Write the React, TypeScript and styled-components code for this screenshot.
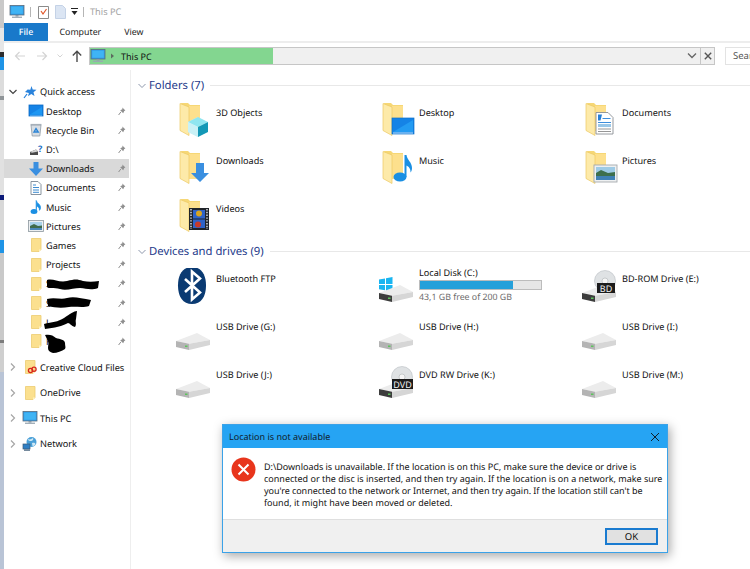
import React from "react";
import styled, { createGlobalStyle } from "styled-components";

const GlobalStyle = createGlobalStyle`
  html, body {
    margin: 0;
    padding: 0;
    width: 750px;
    height: 569px;
    overflow: hidden;
    background: #fff;
    font-family: "Noto Sans", "Open Sans", sans-serif;
    color: #111;
    text-rendering: geometricPrecision;
  }
  * { box-sizing: border-box; }
`;

/* ---------- small drawings ---------- */

function PcIcon({ size = 16 }: { size?: number }) {
  return (
    <svg width={size} height={size} viewBox="0 0 16 16">
      <rect x="1" y="1.5" width="14" height="9.5" fill="#2f9be8" stroke="#5a6b7a" strokeWidth="0.8" />
      <rect x="2.2" y="2.7" width="11.6" height="7" fill="#3fb4f4" />
      <rect x="6.5" y="11" width="3" height="1.6" fill="#8b99a5" />
      <rect x="3" y="12.6" width="10" height="1.3" fill="#9aa7b2" />
    </svg>
  );
}

function TinyFolder({ badge }: { badge?: boolean }) {
  return (
    <svg width="16" height="16" viewBox="0 0 16 16">
      <path d="M3.5 1.5h9.5v11l-2 2h-7.5z" fill="#fbe08f" stroke="#eccb70" strokeWidth="0.8" />
      <path d="M13 12.5h-2v2z" fill="#fff3c4" />
      {badge && (
        <g fill="none" stroke="#d8261c" strokeWidth="1.3">
          <circle cx="8.5" cy="11.5" r="2.1" />
          <circle cx="12" cy="10.2" r="2.1" />
        </g>
      )}
    </svg>
  );
}

function StarPin() {
  return (
    <svg width="16" height="16" viewBox="0 0 16 16">
      <path d="M9.5 2l1.2 3.6 3.8.2-3 2.4 1 3.8-3.2-2-3.3 2.2.9-3.1L3 8l2.6-2.4 2.7.2z" fill="#2a83dc" />
      <path d="M5 10l-3 4" stroke="#2a83dc" strokeWidth="1.2" />
    </svg>
  );
}

function PinIcon() {
  return (
    <svg width="8" height="9" viewBox="0 0 8 9">
      <path d="M4.4.5l3 3-1.2.6-1 2.2-3-3 2.2-1z" fill="#8f8f8f" />
      <path d="M2.8 5L.6 8" stroke="#8f8f8f" strokeWidth="1" />
    </svg>
  );
}

function DesktopGlyph() {
  return (
    <svg width="16" height="16" viewBox="0 0 16 16">
      <rect x="1" y="2" width="14" height="11" fill="#1583e6" stroke="#0c69c4" strokeWidth="0.8" />
      <path d="M2 11.5L14 4v7.8H2z" fill="#1e97f2" />
      <rect x="2" y="12.6" width="12" height="1" fill="#9fd2fa" />
    </svg>
  );
}

function BinGlyph() {
  return (
    <svg width="16" height="16" viewBox="0 0 16 16">
      <path d="M3 3h10l-1.2 11H4.2z" fill="#d7dde3" stroke="#8f9aa5" strokeWidth="0.8" />
      <path d="M2.5 2.5h11" stroke="#a7b0b9" strokeWidth="1.2" />
      <path d="M6 10l2-3.4L10.2 10z" fill="none" stroke="#2b84d6" strokeWidth="1.4" />
    </svg>
  );
}

function DiskGlyph() {
  return (
    <svg width="16" height="16" viewBox="0 0 16 16">
      <path d="M2 10l6-2.5 2 2v3.5H2z" fill="#4a4a4a" />
      <path d="M2 10l6-2.5 2 2-6 1.2z" fill="#d5d5d5" />
      <text x="10" y="10" fontSize="9" fontWeight="700" fill="#1f6fc4" fontFamily="Noto Sans">?</text>
    </svg>
  );
}

function DownArrow() {
  return (
    <svg width="16" height="16" viewBox="0 0 16 16">
      <path d="M5.5 1h5v6.5H15L8 15 1 7.5h4.5z" fill="#3a8fe0" />
    </svg>
  );
}

function DocGlyph() {
  return (
    <svg width="16" height="16" viewBox="0 0 16 16">
      <path d="M3 1.5h7l3 3v10H3z" fill="#fff" stroke="#7c8894" strokeWidth="0.9" />
      <path d="M5 5h3M5 7.5h6M5 10h6M5 12.3h6" stroke="#3c8bd0" strokeWidth="1" />
    </svg>
  );
}

function NoteGlyph() {
  return (
    <svg width="16" height="16" viewBox="0 0 16 16">
      <ellipse cx="6" cy="12.5" rx="3.4" ry="2.5" fill="#1a8fe3" />
      <path d="M8.2 12.5V1.5c.6 3 4.3 3.6 4.3 7 0 1.2-.5 2.2-1 2.8.2-2.6-1.6-3.6-2.2-4" fill="#1a8fe3" stroke="#1a8fe3" strokeWidth="0.8" />
    </svg>
  );
}

function PictureGlyph() {
  return (
    <svg width="16" height="16" viewBox="0 0 16 16">
      <rect x="0.5" y="2.5" width="15" height="11" fill="#eceff1" stroke="#8d979f" strokeWidth="0.8" />
      <rect x="2" y="4" width="12" height="4" fill="#a9d2ea" />
      <path d="M2 8l4-2 4 2 4-.5V12H2z" fill="#3f6b4a" />
      <rect x="2" y="10" width="12" height="2" fill="#4a87b8" />
    </svg>
  );
}

function NetworkGlyph() {
  return (
    <svg width="16" height="16" viewBox="0 0 16 16">
      <circle cx="9.5" cy="6" r="5" fill="#4aa0d8" />
      <path d="M6 3c2 1 3 0 5-1 1 2-1 3-2 3s-3 0-3-2zM10 7c2-.5 3 0 3.5 1-1 2-2 2-3 2z" fill="#cfe8f5" />
      <rect x="1" y="8" width="7" height="5" fill="#2f7fc4" stroke="#3c5a75" strokeWidth="0.7" />
      <rect x="2" y="13.5" width="6" height="1.2" fill="#3c5a75" />
    </svg>
  );
}

function Chevron({ open, color }: { open?: boolean; color?: string }) {
  return (
    <svg width="10" height="10" viewBox="0 0 10 10">
      {open ? (
        <path d="M1.5 3l3.5 3.5L8.5 3" fill="none" stroke={color || "#444"} strokeWidth={color ? 0.9 : 1.2} />
      ) : (
        <path d="M3 1.5L6.5 5 3 8.5" fill="none" stroke="#a6a6a6" strokeWidth="1.2" />
      )}
    </svg>
  );
}

function FolderArt({ kind }: { kind: string }) {
  return (
    <svg width="36" height="40" viewBox="0 0 36 40">
      <path d="M5 1h7l2 2h10v26H13z" fill="#f6d776" />
      <path d="M13 4h11v25H13z" fill="#fde08d" />
      <path d="M4 1.5l9 3.5v28.5l-9-5z" fill="#fdeaa9" stroke="#ecc962" strokeWidth="0.7" />
      {kind === "3d" && (
        <g>
          <path d="M12 20l10-5v20l-10-5z" fill="#d3f4f8" />
          <path d="M12 20l10-5 10 5-10 5z" fill="#8fe6f0" />
          <path d="M22 25l10-5v10l-10 5z" fill="#1398b6" />
          <path d="M12 20l10 5v10l-10-5z" fill="#c9f1f6" />
        </g>
      )}
      {kind === "desktop" && (
        <g>
          <rect x="13" y="16" width="22" height="16" fill="#1583e6" stroke="#0f70c8" strokeWidth="0.7" />
          <path d="M14 30l20-12v12z" fill="#239bf2" />
          <rect x="14" y="30.5" width="20" height="1" fill="#bfe2fb" />
        </g>
      )}
      {kind === "doc" && (
        <g>
          <path d="M14 10.5h12l5 5V32H14z" fill="#fff" stroke="#8a8f94" strokeWidth="0.9" />
          <path d="M16 12.5h4l-1.5 6H16z" fill="#2680d8" />
          <path d="M20.5 16.5h8M16 20.5h13" stroke="#3e8edc" strokeWidth="1" />
          <rect x="16" y="22" width="13" height="3" fill="#9cc8e8" />
          <path d="M16 27h13M16 29.5h13" stroke="#7b7b7b" strokeWidth="0.8" />
        </g>
      )}
      {kind === "down" && <path d="M20 13h8v10h5l-9 9-9-9h5z" fill="#3a8fe0" />}
      {kind === "music" && (
        <g>
          <ellipse cx="21" cy="27" rx="6.5" ry="4.5" fill="#1a8fe3" />
          <path d="M25.5 27V5h2c.5 5 5.5 7 5.5 13 0 2-.7 3.5-1.5 4.5.3-4-2-6-4-7V27z" fill="#1a8fe3" />
        </g>
      )}
      {kind === "picture" && (
        <g>
          <rect x="12" y="15" width="23" height="17" fill="#eef0f1" stroke="#a4a9ad" strokeWidth="0.9" />
          <rect x="14" y="17" width="19" height="7" fill="#9ecbe6" />
          <path d="M14 23l5-3 7 3 7-1v7H14z" fill="#3e6f4c" />
          <rect x="14" y="26" width="19" height="4" fill="#3f80b4" />
        </g>
      )}
      {kind === "video" && (
        <g>
          <rect x="13" y="10" width="20" height="22" fill="#20242a" />
          <rect x="17" y="12" width="12" height="8.5" fill="#2f63c8" />
          <rect x="17" y="21.5" width="12" height="8.5" fill="#2f63c8" />
          <circle cx="23" cy="15.5" r="3" fill="#d9a520" />
          <circle cx="22" cy="26.5" r="3" fill="#c83a2a" />
          <path d="M15 11v20M31 11v20" stroke="#cfd3d6" strokeWidth="1.6" strokeDasharray="1.4 1.4" />
        </g>
      )}
    </svg>
  );
}

function DriveArt({ kind }: { kind?: string }) {
  const dark = kind === "win" || kind === "bd" || kind === "dvd";
  const label = kind === "bd" ? "BD" : kind === "dvd" ? "DVD" : "";
  return (
    <svg width="36" height="36" viewBox="0 0 36 36">
      {label && (
        <g>
          <circle cx="23" cy="13" r="10.5" fill="#dfe2e4" stroke="#b9bec2" strokeWidth="0.6" />
          <circle cx="23" cy="13" r="3" fill="#f6f6f6" stroke="#aeb3b6" strokeWidth="0.6" />
        </g>
      )}
      {kind === "win" && (
        <path d="M0 11.5l6-1V16H0zM7 10.3L13.5 9v7H7zM0 17h6v5.3l-6-1zM7 17h6.5v7L7 22.7z" fill="#19b5f1" />
      )}
      <path d="M0 25l21-8 13 7L13 27.8z" fill="#ececec" />
      <path d="M0 25l13 2.8V34L0 31z" fill={dark ? "#3d3d3d" : "#b4b4b4"} />
      <path d="M13 27.8L34 24v5L13 34z" fill="#d6d6d6" />
      <rect x="9" y="29.5" width="2.5" height="1.5" fill="#5cc45c" />
      {label && (
        <g>
          <rect x={label === "BD" ? 15 : 13} y="15" width={label === "BD" ? 18 : 21} height="10" fill="#1c1c1c" />
          <text x={label === "BD" ? 24 : 23.5} y="23.5" textAnchor="middle" fontSize="9" fill="#f2f2f2" fontFamily="Noto Sans">
            {label}
          </text>
        </g>
      )}
    </svg>
  );
}

function BluetoothArt() {
  return (
    <svg width="36" height="40" viewBox="0 0 36 40">
      <path d="M16 -1C7 -1 2 6 2 17.5S7 36 16 36s14-7 14-18.5S25 -1 16 -1z" fill="#0a3a72" />
      <path d="M9 11l15 13.5-8 7V3.5l8 7L9 24" fill="none" stroke="#fff" strokeWidth="2.6" />
    </svg>
  );
}

/* ---------- layout ---------- */

const Page = styled.div`
  position: relative;
  display: flex;
  width: 750px;
  height: 569px;
  overflow: hidden;
`;

const DesktopEdge = styled.div`
  flex: 0 0 4px;
  background: linear-gradient(
    to bottom,
    #c9c9c9 0 28px,
    #e6e6e6 28px 52px,
    #2d2d2d 52px 57px,
    #1f94e6 57px 70px,
    #dcdcdc 70px 96px,
    #8f9498 96px 100px,
    #e1e1e1 100px 195px,
    #0c1a78 195px 200px,
    #d8d8d8 200px 240px,
    #1f94e6 240px 253px,
    #c9c9c9 253px 340px,
    #7d7d7d 340px 343px,
    #cfcfcf 343px 372px,
    #b9c4d6 372px 569px
  );
`;

const Window = styled.div`
  flex: 1;
  display: flex;
  flex-direction: column;
  min-width: 0;
`;

const TitleBar = styled.div`
  display: flex;
  align-items: center;
  height: 23px;
  padding-left: 5px;
`;

const QuickIcon = styled.span<{ $w: number }>`
  display: inline-flex;
  width: ${(p) => p.$w}px;
  justify-content: center;
  align-items: center;
`;

const TitleSeparator = styled.span`
  width: 1px;
  height: 10px;
  background: #b5b5b5;
  margin: 0 5px;
`;

const TitleText = styled.span`
  font-size: 9.2px;
  color: #a3a3a3;
  margin-left: 1px;
`;

const RibbonTabs = styled.div`
  display: flex;
  height: 20px;
  border-bottom: 2px solid #ededed;
`;

const RibbonTab = styled.div<{ $active?: boolean }>`
  display: flex;
  align-items: center;
  justify-content: center;
  height: 18px;
  font-size: 8.8px;
  ${(p) =>
    p.$active
      ? "width: 44px; background: #1979ca; color: #fff; font-weight: 500;"
      : "padding: 0 11.5px; color: #222;"}
`;

const AddressRow = styled.div`
  display: flex;
  align-items: center;
  height: 27px;
  padding-bottom: 1px;
`;

const NavGroup = styled.div`
  display: flex;
  align-items: center;
  width: 85px;
  padding-left: 10px;
`;

const NavSlot = styled.span<{ $w: number }>`
  display: inline-flex;
  width: ${(p) => p.$w}px;
`;

const AddressBar = styled.div`
  position: relative;
  flex: 0 0 626px;
  display: flex;
  align-items: center;
  justify-content: flex-end;
  height: 18px;
  background: #f0f0f0;
  border: 1px solid #c6c6c6;
`;

const AddressProgress = styled.div`
  position: absolute;
  left: 0;
  top: 0;
  bottom: 0;
  width: 183px;
  display: flex;
  align-items: center;
  gap: 4px;
  background: #83d690;
  font-size: 9px;
  color: #111;
`;

const CrumbText = styled.span`
  margin-left: 2px;
`;

const AddressCaret = styled.svg`
  margin-right: 1px;
`;

const AddressButton = styled.div`
  display: flex;
  align-items: center;
  justify-content: center;
  width: 14px;
  height: 100%;
  border-left: 1px solid #c6c6c6;
`;

const SearchBox = styled.div`
  margin-left: 10px;
  flex: 1;
  height: 18px;
  padding-left: 7px;
  border: 1px solid #e3e3e3;
  border-right: none;
  font-size: 9.5px;
  line-height: 16px;
  color: #555;
  white-space: nowrap;
  overflow: hidden;
`;

const Main = styled.div`
  flex: 1;
  display: flex;
  min-height: 0;
`;

const Sidebar = styled.div`
  flex: 0 0 127px;
  padding: 12.4px 1px 0 0;
  border-right: 1px solid #eeeeee;
`;

const TreeRow = styled.div<{ $child?: boolean; $selected?: boolean; $root?: boolean }>`
  position: relative;
  display: flex;
  align-items: center;
  height: 19.2px;
  padding-left: ${(p) => (p.$child ? 24 : 4)}px;
  padding-right: 3px;
  margin-top: ${(p) => (p.$root ? 6.4 : 0)}px;
  background: ${(p) => (p.$selected ? "#d9d9d9" : "transparent")};
`;

const TreeChevron = styled.span`
  display: inline-flex;
  width: 14px;
`;

const TreeIcon = styled.span`
  display: inline-flex;
  width: 16px;
  height: 16px;
  margin-right: 2px;
`;

const TreeLabel = styled.span`
  font-size: 9.2px;
  white-space: nowrap;
`;

const TreePin = styled.span`
  display: inline-flex;
  margin-left: auto;
`;

const Scribble = styled.svg`
  position: absolute;
  left: 40px;
  top: -6px;
`;

const Content = styled.div`
  flex: 1;
  padding: 8px 0 0 6px;
  min-width: 0;
`;

const GroupHeader = styled.div`
  display: flex;
  align-items: center;
  height: 15px;
  margin-bottom: 9px;
  gap: 2px;
`;

const GroupTitle = styled.span`
  font-size: 11.3px;
  color: #1e3a8a;
  white-space: nowrap;
`;

const GroupLine = styled.span`
  flex: 1;
  height: 1px;
  margin-left: 4px;
  background: #e8e8e8;
`;

const ItemGrid = styled.div`
  display: grid;
  grid-template-columns: 203px 203px 1fr;
  grid-auto-rows: 40px;
  row-gap: 8px;
  padding-left: 39px;
  margin-bottom: 6px;
`;

const Item = styled.div`
  display: flex;
  gap: 4px;
  height: 40px;
`;

const ItemName = styled.div<{ $raised?: boolean }>`
  font-size: 9.1px;
  line-height: 14px;
  margin-top: ${(p) => (p.$raised ? -2 : 4)}px;
  white-space: nowrap;
`;

const UsageBar = styled.div`
  width: 123px;
  height: 10px;
  background: #e6e6e6;
  border: 1px solid #bcbcbc;
`;

const UsageFill = styled.div`
  height: 100%;
  background: #26a0da;
`;

const DiskNote = styled.div`
  font-size: 8.8px;
  line-height: 13px;
  margin-top: 1px;
  color: #6d6d6d;
  white-space: nowrap;
`;

const Dialog = styled.div`
  position: absolute;
  left: 222px;
  top: 424px;
  width: 446px;
  height: 129px;
  display: flex;
  flex-direction: column;
  background: #fff;
  border: 1px solid #3ba2e8;
  box-shadow: 2px 3px 10px rgba(0, 0, 0, 0.35);
`;

const DialogTitle = styled.div`
  display: flex;
  align-items: center;
  justify-content: space-between;
  height: 23px;
  padding: 0 7px 0 6px;
  background: #26a4f3;
  font-size: 9px;
  color: #10202c;
`;

const DialogBody = styled.div`
  flex: 1;
  display: flex;
  gap: 8px;
  padding: 9px 8px 0 8px;
`;

const ErrorIcon = styled.svg`
  flex: none;
`;

const DialogMessage = styled.div`
  font-size: 9px;
  line-height: 12px;
  color: #111;
  margin-top: 4px;
  white-space: nowrap;
`;

const MessageLine = styled.span<{ $spacing: number }>`
  display: block;
  letter-spacing: ${(p) => p.$spacing}px;
`;

const DialogFooter = styled.div`
  display: flex;
  justify-content: flex-end;
  align-items: flex-start;
  height: 33px;
  padding: 8px 9px 0 0;
  background: #f0f0f0;
  border-top: 1px solid #dfdfdf;
`;

const DialogButton = styled.div`
  display: flex;
  align-items: center;
  justify-content: center;
  width: 53px;
  height: 17px;
  background: #e1e1e1;
  border: 2px solid #1a7bd0;
  font-size: 9.5px;
`;

const folders = [
  ["3D Objects", "3d"],
  ["Desktop", "desktop"],
  ["Documents", "doc"],
  ["Downloads", "down"],
  ["Music", "music"],
  ["Pictures", "picture"],
  ["Videos", "video"],
];

const drives = [
  ["USB Drive (G:)", ""],
  ["USB Drive (H:)", ""],
  ["USB Drive (I:)", ""],
  ["USB Drive (J:)", ""],
  ["DVD RW Drive (K:)", "dvd"],
  ["USB Drive (M:)", ""],
];

const pinned: [string, React.ReactNode, boolean?][] = [
  ["Desktop", <DesktopGlyph />],
  ["Recycle Bin", <BinGlyph />],
  ["D:\\", <DiskGlyph />],
  ["Downloads", <DownArrow />, true],
  ["Documents", <DocGlyph />],
  ["Music", <NoteGlyph />],
  ["Pictures", <PictureGlyph />],
  ["Games", <TinyFolder />],
  ["Projects", <TinyFolder />],
];

// black marker over the private folder names
const scribbles = [
  "M3 12c6-2 12 3 20 1s10-2 16 0c5 1 10 1 16 0l-1 7c-8 3-12 0-18 0s-14 3-20 1-12 0-13-2z",
  "M3 12c8-2 14 1 20-1s14 0 24 2l-2 6c-6 2-14 0-20 1s-14 1-21-1z",
  "M0 17c8-2 14-2 20-6s10-7 13-7l-1 8c-1 3 1 5-1 8-4-1-5-4-7-4-5 3-14 5-23 6z",
  "M1 9c4-1 8 0 11 3 4 1 9 2 9 5s1 4 0 6c-3 2-8 4-12 4-3-1-5-2-5-5s1-5 0-7z",
];

const messageLines: [string, number][] = [
  ["D:\\Downloads is unavailable. If the location is on this PC, make sure the device or drive is", -0.02],
  ["connected or the disc is inserted, and then try again. If the location is on a network, make sure", 0],
  ["you're connected to the network or Internet, and then try again. If the location still can't be", -0.05],
  ["found, it might have been moved or deleted.", 0],
];

export default function App() {
  return (
    <Page>
      <GlobalStyle />
      <DesktopEdge />
      <Window>
        <TitleBar>
          <PcIcon />
          <TitleSeparator />
          <QuickIcon $w={14}>
            <svg width="11" height="14" viewBox="0 0 11 14">
              <path d="M.5 1.5h10v12H.5z" fill="#fff" stroke="#8b8b8b" />
              <path d="M3 6l2 3 3.5-5" fill="none" stroke="#e2572a" strokeWidth="1.2" />
            </svg>
          </QuickIcon>
          <QuickIcon $w={20}>
            <svg width="11" height="14" viewBox="0 0 11 14">
              <path d="M.5.5h7l3 3v10H.5z" fill="#dbe5f3" stroke="#c4d2e6" />
            </svg>
          </QuickIcon>
          <QuickIcon $w={8}>
            <svg width="7" height="7" viewBox="0 0 7 7">
              <path d="M0 0h7v1H0zM.5 3h6L3.5 7z" fill="#222" />
            </svg>
          </QuickIcon>
          <TitleSeparator />
          <TitleText>This PC</TitleText>
        </TitleBar>
        <RibbonTabs>
          <RibbonTab $active>File</RibbonTab>
          <RibbonTab>Computer</RibbonTab>
          <RibbonTab>View</RibbonTab>
        </RibbonTabs>
        <AddressRow>
          <NavGroup>
            <NavSlot $w={23}>
              <svg width="11" height="10" viewBox="0 0 11 10">
                <path d="M11 5H2M5.5 1L1.5 5l4 4" fill="none" stroke="#d4d4d4" strokeWidth="1.2" />
              </svg>
            </NavSlot>
            <NavSlot $w={20}>
              <svg width="11" height="10" viewBox="0 0 11 10">
                <path d="M0 5h9M5.5 1l4 4-4 4" fill="none" stroke="#d4d4d4" strokeWidth="1.2" />
              </svg>
            </NavSlot>
            <NavSlot $w={15}>
              <svg width="6" height="6" viewBox="0 0 6 6">
                <path d="M.5 1.5L3 4l2.5-2.5" fill="none" stroke="#d4d4d4" />
              </svg>
            </NavSlot>
            <svg width="10" height="12" viewBox="0 0 10 12">
              <path d="M5 12V1.5M.8 5.5L5 1.2l4.2 4.3" fill="none" stroke="#4a4a4a" strokeWidth="1.4" />
            </svg>
          </NavGroup>
          <AddressBar>
            <AddressProgress>
              <PcIcon />
              <svg width="5" height="6" viewBox="0 0 5 6">
                <path d="M1 .5L4 3 1 5.5z" fill="#5d6b5f" />
              </svg>
              <CrumbText>This PC</CrumbText>
            </AddressProgress>
            <AddressCaret width="14" height="8" viewBox="0 0 14 8">
              <path d="M3 1.5L7 5.5l4-4" fill="none" stroke="#666" strokeWidth="1.3" />
            </AddressCaret>
            <AddressButton>
              <svg width="8" height="8" viewBox="0 0 8 8">
                <path d="M.8.8l6.4 6.4M7.2.8L.8 7.2" stroke="#555" strokeWidth="1.4" />
              </svg>
            </AddressButton>
          </AddressBar>
          <SearchBox>Search This PC</SearchBox>
        </AddressRow>
        <Main>
          <Sidebar>
            <TreeRow>
              <TreeChevron><Chevron open /></TreeChevron>
              <TreeIcon><StarPin /></TreeIcon>
              <TreeLabel>Quick access</TreeLabel>
            </TreeRow>
            {pinned.map(([label, icon, selected]) => (
              <TreeRow $child $selected={selected} key={label}>
                <TreeIcon>{icon}</TreeIcon>
                <TreeLabel>{label}</TreeLabel>
                <TreePin><PinIcon /></TreePin>
              </TreeRow>
            ))}
            {scribbles.map((d, i) => (
              <TreeRow $child key={d}>
                <TreeIcon><TinyFolder /></TreeIcon>
                <TreeLabel>{"SSLF"[i]}</TreeLabel>
                <TreePin><PinIcon /></TreePin>
                <Scribble width="64" height="32" viewBox="0 0 64 32">
                  <path d={d} fill="#000" />
                </Scribble>
              </TreeRow>
            ))}
            <TreeRow $root>
              <TreeChevron><Chevron /></TreeChevron>
              <TreeIcon><TinyFolder badge /></TreeIcon>
              <TreeLabel>Creative Cloud Files</TreeLabel>
            </TreeRow>
            <TreeRow $root>
              <TreeChevron><Chevron /></TreeChevron>
              <TreeIcon><TinyFolder /></TreeIcon>
              <TreeLabel>OneDrive</TreeLabel>
            </TreeRow>
            <TreeRow $root>
              <TreeChevron><Chevron /></TreeChevron>
              <TreeIcon><PcIcon /></TreeIcon>
              <TreeLabel>This PC</TreeLabel>
            </TreeRow>
            <TreeRow $root>
              <TreeChevron><Chevron /></TreeChevron>
              <TreeIcon><NetworkGlyph /></TreeIcon>
              <TreeLabel>Network</TreeLabel>
            </TreeRow>
          </Sidebar>
          <Content>
            <GroupHeader>
              <Chevron open color="#7f8aa0" />
              <GroupTitle>Folders (7)</GroupTitle>
              <GroupLine />
            </GroupHeader>
            <ItemGrid>
              {folders.map(([name, kind]) => (
                <Item key={name}>
                  <FolderArt kind={kind} />
                  <ItemName>{name}</ItemName>
                </Item>
              ))}
            </ItemGrid>
            <GroupHeader>
              <Chevron open color="#7f8aa0" />
              <GroupTitle>Devices and drives (9)</GroupTitle>
              <GroupLine />
            </GroupHeader>
            <ItemGrid>
              <Item>
                <BluetoothArt />
                <ItemName>Bluetooth FTP</ItemName>
              </Item>
              <Item>
                <DriveArt kind="win" />
                <div>
                  <ItemName $raised>Local Disk (C:)</ItemName>
                  <UsageBar>
                    <UsageFill style={{ width: `${(154 / 200) * 100}%` }} />
                  </UsageBar>
                  <DiskNote>43,1 GB free of 200 GB</DiskNote>
                </div>
              </Item>
              <Item>
                <DriveArt kind="bd" />
                <ItemName>BD-ROM Drive (E:)</ItemName>
              </Item>
              {drives.map(([name, kind]) => (
                <Item key={name}>
                  <DriveArt kind={kind} />
                  <ItemName>{name}</ItemName>
                </Item>
              ))}
            </ItemGrid>
          </Content>
        </Main>
      </Window>
      <Dialog>
        <DialogTitle>
          Location is not available
          <svg width="10" height="10" viewBox="0 0 10 10">
            <path d="M1 1l8 8M9 1l-8 8" stroke="#10202c" strokeWidth="1" />
          </svg>
        </DialogTitle>
        <DialogBody>
          <ErrorIcon width="25" height="25" viewBox="0 0 25 25">
            <circle cx="12.5" cy="12.5" r="12" fill="#e8351c" />
            <path d="M7.5 7.5l10 10M17.5 7.5l-10 10" stroke="#fff" strokeWidth="2" />
          </ErrorIcon>
          <DialogMessage>
            {messageLines.map(([line, spacing]) => (
              <MessageLine $spacing={spacing} key={line}>
                {line}
              </MessageLine>
            ))}
          </DialogMessage>
        </DialogBody>
        <DialogFooter>
          <DialogButton>OK</DialogButton>
        </DialogFooter>
      </Dialog>
    </Page>
  );
}
